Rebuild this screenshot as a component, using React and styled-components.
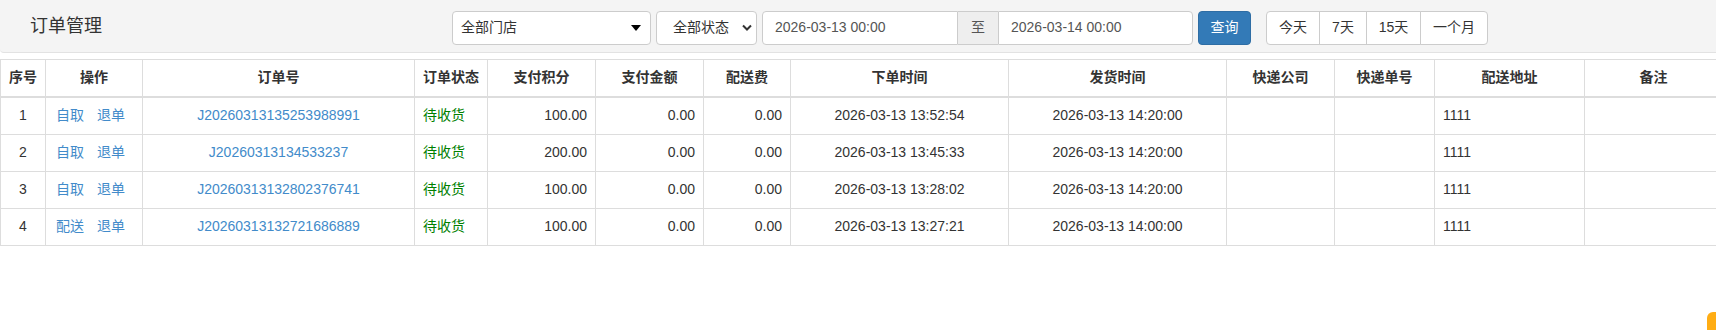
import React from "react";
import styled, { createGlobalStyle } from "styled-components";

const GlobalStyle = createGlobalStyle`
  html, body {
    margin: 0;
    padding: 0;
    background: #fff;
    overflow: hidden;
  }
  body {
    font-family: "Liberation Sans", Arial, "Noto Sans CJK SC", sans-serif;
    font-size: 14px;
    line-height: 1.42857;
    color: #333;
  }
  * { box-sizing: border-box; }
`;

const Page = styled.div`
  width: 100%;
  overflow: hidden;
`;

const Header = styled.div`
  display: flex;
  align-items: center;
  height: 53px;
  background: #f4f4f4;
  border-bottom: 1px solid #e2e2e2;
  border-bottom-left-radius: 4px;
  margin-bottom: 6px;
`;

const Title = styled.div`
  width: 452px;
  padding-left: 30px;
  font-size: 18px;
  color: #333;
  line-height: 26px;
`;

const Toolbar = styled.div`
  display: flex;
  align-items: center;
  gap: 5px;
  margin-top: 4px;
`;

const Control = styled.div`
  position: relative;
  display: flex;
  align-items: center;
  height: 34px;
  width: ${(p) => p.w}px;
  padding: 0 ${(p) => p.pad || 8}px;
  background: #fff;
  border: 1px solid #ccc;
  border-radius: 4px;
  color: #333;
  font-size: 14px;
`;

const Caret = styled.span`
  position: absolute;
  right: 9px;
  top: 13px;
  width: 0;
  height: 0;
  border-left: 5px solid transparent;
  border-right: 5px solid transparent;
  border-top: 6px solid #000;
`;

const Chevron = styled.svg`
  position: absolute;
  right: 4px;
  top: 12px;
`;

const InputGroup = styled.div`
  display: flex;
  height: 34px;
`;

const DateInput = styled.div`
  display: flex;
  align-items: center;
  width: ${(p) => p.w}px;
  height: 34px;
  padding: 0 12px;
  background: #fff;
  border: 1px solid #ccc;
  color: #555;
  border-radius: ${(p) => (p.first ? "4px 0 0 4px" : "0 4px 4px 0")};
`;

const Addon = styled.div`
  display: flex;
  align-items: center;
  justify-content: center;
  width: 40px;
  height: 34px;
  background: #eee;
  border-top: 1px solid #ccc;
  border-bottom: 1px solid #ccc;
  color: #555;
`;

const Primary = styled.button`
  height: 34px;
  width: 53px;
  padding: 0;
  background: #337ab7;
  border: 1px solid #2e6da4;
  border-radius: 4px;
  color: #fff;
  font: inherit;
`;

const BtnGroup = styled.div`
  display: flex;
  margin-left: 10px;
`;

const GroupBtn = styled.button`
  height: 34px;
  width: ${(p) => p.w}px;
  padding: 0;
  background: #fff;
  border: 1px solid #ccc;
  margin-left: -1px;
  color: #333;
  font: inherit;
  &:first-child {
    margin-left: 0;
    border-radius: 4px 0 0 4px;
  }
  &:last-child {
    border-radius: 0 4px 4px 0;
  }
`;

const Table = styled.table`
  border-collapse: collapse;
  table-layout: fixed;
  width: 1722px;
`;

const Th = styled.th`
  padding: 8px;
  height: 37px;
  font-weight: bold;
  text-align: center;
  border: 1px solid #ddd;
  border-bottom: 2px solid #ddd;
  white-space: nowrap;
`;

const Td = styled.td`
  padding: 8px ${(p) => p.padX || 8}px;
  height: 37px;
  border: 1px solid #ddd;
  text-align: ${(p) => p.align || "left"};
  white-space: nowrap;
`;

const Link = styled.a`
  color: #428bca;
  text-decoration: none;
  margin-right: ${(p) => (p.gap ? "13px" : "0")};
`;

const Status = styled.span`
  color: #008000;
`;

const Badge = styled.div`
  position: fixed;
  right: 0;
  bottom: 0;
  width: 9px;
  height: 18px;
  background: #ffad14;
  border-top-left-radius: 6px;
`;

const cols = [45, 97, 272, 73, 108, 108, 87, 218, 218, 108, 100, 150, 138];
const heads = ["序号", "操作", "订单号", "订单状态", "支付积分", "支付金额", "配送费", "下单时间", "发货时间", "快递公司", "快递单号", "配送地址", "备注"];

const rows = [
  { no: 1, op: "自取", id: "J20260313135253988991", pts: "100.00", at: "2026-03-13 13:52:54", ship: "2026-03-13 14:20:00" },
  { no: 2, op: "自取", id: "J20260313134533237", pts: "200.00", at: "2026-03-13 13:45:33", ship: "2026-03-13 14:20:00" },
  { no: 3, op: "自取", id: "J20260313132802376741", pts: "100.00", at: "2026-03-13 13:28:02", ship: "2026-03-13 14:20:00" },
  { no: 4, op: "配送", id: "J20260313132721686889", pts: "100.00", at: "2026-03-13 13:27:21", ship: "2026-03-13 14:00:00" },
];

export default function App() {
  return (
    <Page>
      <GlobalStyle />
      <Header>
        <Title>订单管理</Title>
        <Toolbar>
          <Control w={199}>
            全部门店
            <Caret />
          </Control>
          <Control w={101} pad={16}>
            全部状态
            <Chevron width="10" height="8" viewBox="0 0 10 8">
              <path d="M1 1.5 L5 5.5 L9 1.5" fill="none" stroke="#333" strokeWidth="2" />
            </Chevron>
          </Control>
          <InputGroup>
            <DateInput w={196} first>2026-03-13 00:00</DateInput>
            <Addon>至</Addon>
            <DateInput w={195}>2026-03-14 00:00</DateInput>
          </InputGroup>
          <Primary>查询</Primary>
          <BtnGroup>
            <GroupBtn w={54}>今天</GroupBtn>
            <GroupBtn w={48}>7天</GroupBtn>
            <GroupBtn w={55}>15天</GroupBtn>
            <GroupBtn w={68}>一个月</GroupBtn>
          </BtnGroup>
        </Toolbar>
      </Header>
      <Table>
        <colgroup>
          {cols.map((w, i) => (
            <col key={i} style={{ width: w }} />
          ))}
        </colgroup>
        <thead>
          <tr>
            {heads.map((h) => (
              <Th key={h}>{h}</Th>
            ))}
          </tr>
        </thead>
        <tbody>
          {rows.map((r) => (
            <tr key={r.no}>
              <Td align="center">{r.no}</Td>
              <Td padX={10}>
                <Link gap>{r.op}</Link>
                <Link>退单</Link>
              </Td>
              <Td align="center">
                <Link>{r.id}</Link>
              </Td>
              <Td>
                <Status>待收货</Status>
              </Td>
              <Td align="right">{r.pts}</Td>
              <Td align="right">0.00</Td>
              <Td align="right">0.00</Td>
              <Td align="center">{r.at}</Td>
              <Td align="center">{r.ship}</Td>
              <Td />
              <Td />
              <Td>1111</Td>
              <Td />
            </tr>
          ))}
        </tbody>
      </Table>
      <Badge />
    </Page>
  );
}
